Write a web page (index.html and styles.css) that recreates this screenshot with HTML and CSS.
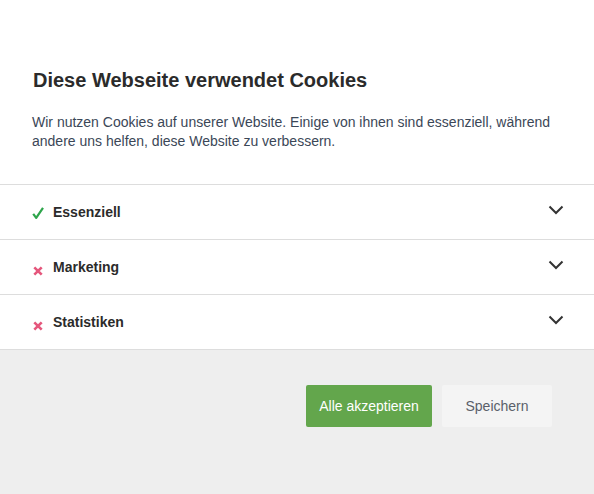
FILE: index.html
```html
<!DOCTYPE html>
<html lang="de">
<head>
<meta charset="utf-8">
<link rel="stylesheet" href="styles.css">
</head>
<body>
<div class="dialog">
  <div class="intro">
    <h1 class="title">Diese Webseite verwendet Cookies</h1>
    <p class="text">Wir nutzen Cookies auf unserer Website. Einige von ihnen sind essenziell, während andere uns helfen, diese Website zu verbessern.</p>
  </div>
  <div class="groups">
    <div class="group">
      <svg class="status on" width="12" height="12" viewBox="0 0 12 12"><path d="M1.2 6.8 L4.2 10.8 L11 0.8" fill="none" stroke="#2ea54b" stroke-width="2.2" stroke-linejoin="round"/></svg>
      <span class="label">Essenziell</span>
      <svg class="chev" width="16" height="10" viewBox="0 0 16 10"><path d="M1.5 1.5 L8 8 L14.5 1.5" fill="none" stroke="#333" stroke-width="2"/></svg>
    </div>
    <div class="group">
      <svg class="status off" width="10" height="10" viewBox="0 0 10 10"><path d="M1.3 1.3 L8.7 8.7 M8.7 1.3 L1.3 8.7" fill="none" stroke="#e5577c" stroke-width="2.6"/></svg>
      <span class="label">Marketing</span>
      <svg class="chev" width="16" height="10" viewBox="0 0 16 10"><path d="M1.5 1.5 L8 8 L14.5 1.5" fill="none" stroke="#333" stroke-width="2"/></svg>
    </div>
    <div class="group">
      <svg class="status off" width="10" height="10" viewBox="0 0 10 10"><path d="M1.3 1.3 L8.7 8.7 M8.7 1.3 L1.3 8.7" fill="none" stroke="#e5577c" stroke-width="2.6"/></svg>
      <span class="label">Statistiken</span>
      <svg class="chev" width="16" height="10" viewBox="0 0 16 10"><path d="M1.5 1.5 L8 8 L14.5 1.5" fill="none" stroke="#333" stroke-width="2"/></svg>
    </div>
  </div>
  <div class="footer">
    <button class="btn accept">Alle akzeptieren</button>
    <button class="btn save">Speichern</button>
  </div>
</div>
</body>
</html>
```

FILE: styles.css
```css
html, body {
  margin: 0;
  padding: 0;
  height: 100%;
  background: #fff;
  font-family: "Liberation Sans", Arial, sans-serif;
}
.dialog {
  display: flex;
  flex-direction: column;
  height: 494px;
}
.intro {
  padding: 67px 32px 0 32px;
}
.title {
  margin: 0;
  font-size: 20px;
  line-height: 26px;
  font-weight: bold;
  color: #2b2b2b;
  padding-left: 1px;
}
.text {
  margin: 20px 0 0 0;
  font-size: 14px;
  line-height: 19px;
  color: #3b4757;
}
.groups {
  margin-top: 33px;
  border-top: 1px solid #ddd;
}
.group {
  display: flex;
  align-items: center;
  height: 54px;
  border-bottom: 1px solid #ddd;
  padding: 0 30px 0 32px;
}
.status {
  display: block;
  flex: none;
}
.status.on {
  margin: 1px 9px 0 0;
}
.status.off {
  margin: 8px 10px 0 1px;
}
.label {
  flex: 1;
  font-size: 14px;
  font-weight: bold;
  color: #2b2b2b;
}
.chev {
  display: block;
  margin-top: -5px;
}
.footer {
  flex: 1;
  background: #eeeeee;
  display: flex;
  justify-content: flex-end;
  align-items: flex-start;
  gap: 10px;
  padding: 35px 42px 0 0;
}
.btn {
  height: 42px;
  border: none;
  border-radius: 2px;
  font-family: "Liberation Sans", Arial, sans-serif;
  font-size: 14px;
  cursor: pointer;
}
.accept {
  width: 126px;
  background: #63a64c;
  color: #fff;
}
.save {
  width: 110px;
  background: #f4f4f4;
  color: #5a5f6a;
}
```
